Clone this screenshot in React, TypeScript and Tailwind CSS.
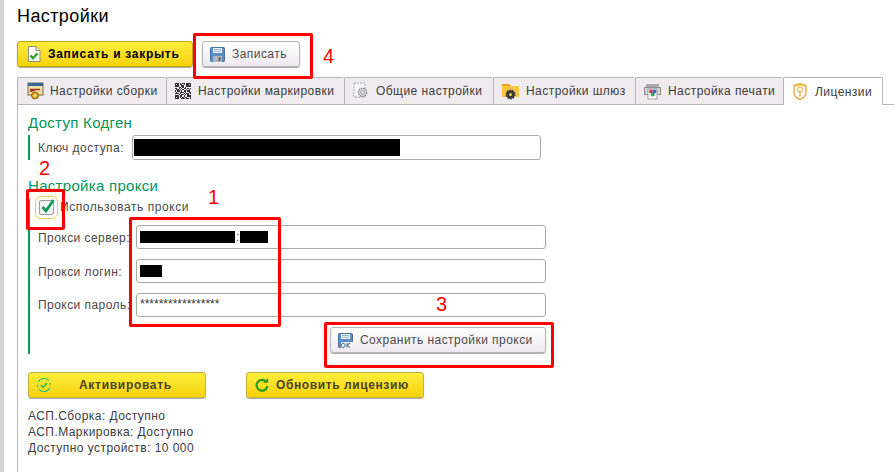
import React from "react";

const FloppyIcon = ({ ok = false }: { ok?: boolean }) => (
  <svg width="15" height="15" viewBox="0 0 15 15" className="shrink-0">
    <rect x="0.5" y="0.5" width="14" height="14" rx="1" fill="#5b8ec4" stroke="#47719f" />
    <rect x="3" y="1" width="9" height="5" fill="#eef4fa" />
    <path d="M4 2.5h7M4 4.3h7" stroke="#7da3c9" strokeWidth="0.8" />
    {ok ? (
      <>
        <rect x="3" y="9" width="12" height="6" fill="#eef2f6" />
        <path d="M5.2 10.2a1.8 2.2 0 1 0 .01 0M9 10v4.5M12 10l-2.8 2.2 2.8 2.3" fill="none" stroke="#3f5f80" strokeWidth="1" />
      </>
    ) : (
      <>
        <rect x="3" y="9" width="9" height="6" fill="#aeb6be" />
        <rect x="8.5" y="10" width="2" height="4" fill="#5b6570" />
      </>
    )}
  </svg>
);

const DocCheckIcon = () => (
  <svg width="14" height="16" viewBox="0 0 14 16" className="shrink-0">
    <path d="M1.5.5h7.5l4 4v11h-11.500z" fill="#fbfbf4" stroke="#8a8f80" />
    <path d="M9 .5v4h4" fill="#e5e5d8" stroke="#8a8f80" />
    <path d="M3.500 9.500l2.500 2.800 4.500-5" fill="none" stroke="#2ca02c" strokeWidth="2.200" />
  </svg>
);

const BuildIcon = () => (
  <svg width="18" height="18" viewBox="0 0 18 18" className="shrink-0">
    <rect x="1" y="1" width="15" height="12" fill="#f5dfa8" stroke="#7a6a3c" />
    <rect x="1" y="1" width="15" height="3" fill="#35659b" />
    <path d="M3 7.500h10M3 9.500l6-2" stroke="#a3322a" strokeWidth="1.400" />
    <circle cx="8" cy="13.500" r="3.500" fill="#e0a020" stroke="#8a6410" />
    <circle cx="8" cy="13.500" r="1.200" fill="#fff3c8" />
  </svg>
);

const qrCells = [
  "1110101101111", "1010110101101", "1110011001111", "0001101010000", "1101010110101", "0110101001010",
  "1011010110110", "0100111010011", "1110100101101", "0001011010100", "1110110100111", "1010101011001", "1110011101101",
];

const QrIcon = () => (
  <svg width="16" height="16" viewBox="0 0 13 13" className="shrink-0" shapeRendering="crispEdges">
    {qrCells.map((row, y) =>
      row.split("").map((c, x) => (c === "1" ? <rect key={`${x}-${y}`} x={x} y={y} width="1" height="1" fill="#333" /> : null))
    )}
  </svg>
);

const GearDocIcon = () => (
  <svg width="16" height="18" viewBox="0 0 16 18" className="shrink-0">
    <rect x="1" y="1" width="11" height="14" fill="#f8f8f8" stroke="#a8a8a8" strokeDasharray="2 1" />
    <circle cx="9.500" cy="10.500" r="4" fill="#eeeeee" stroke="#7d8790" strokeWidth="1.500" strokeDasharray="1.600 0.800" />
    <circle cx="9.500" cy="10.500" r="1.800" fill="#fff" stroke="#7d8790" />
  </svg>
);

const FolderGearIcon = () => (
  <svg width="17" height="17" viewBox="0 0 17 17" className="shrink-0">
    <path d="M0 1h7l2 2h8v11H0z" fill="#fcc63c" />
    <path d="M0 1h7l2 2H0z" fill="#ef9f2b" />
    <circle cx="8.500" cy="11.500" r="4.200" fill="#3a3a3a" stroke="#3a3a3a" strokeWidth="1.600" strokeDasharray="1.600 1" />
    <circle cx="8.500" cy="11.500" r="1.500" fill="#f2c850" />
  </svg>
);

const PrintIcon = () => (
  <svg width="17" height="17" viewBox="0 0 17 17" className="shrink-0">
    <rect x="2" y="1" width="13" height="3" fill="#a9a9a9" />
    <rect x="0.500" y="4.500" width="16" height="7" fill="#d6d6d6" stroke="#8f8f8f" />
    <rect x="4" y="6" width="9" height="10" fill="#fff" stroke="#a0a0a0" />
    <circle cx="7" cy="8.500" r="2" fill="#d33a4a" />
    <circle cx="10.500" cy="8.500" r="2" fill="#3672c8" />
    <circle cx="8.700" cy="11.500" r="2" fill="#3aa655" />
  </svg>
);

const LicenseIcon = () => (
  <svg width="14" height="17" viewBox="0 0 14 17" className="shrink-0">
    <path d="M1 2.500L7 .8l6 1.700v7.500c0 3-3.500 5.500-6 6.300-2.500-.8-6-3.300-6-6.300z" fill="#fff" stroke="#f7a035" strokeWidth="1.300" />
    <path d="M2.500 3.500L7 2.200l4.500 1.300" fill="none" stroke="#f4d63a" strokeWidth="1" />
    <circle cx="7" cy="6.500" r="2.600" fill="#fff4d8" stroke="#efae58" />
    <path d="M7 9v4" stroke="#efae58" strokeWidth="1.600" />
  </svg>
);

const ActivateIcon = () => (
  <svg width="16" height="16" viewBox="0 0 16 16" className="shrink-0" fill="none">
    <path d="M2.300 5A6.500 6.500 0 0 1 13 3.700" stroke="#19c08a" strokeWidth="1.100" />
    <path d="M13.700 11A6.500 6.500 0 0 1 3 12.300" stroke="#19c08a" strokeWidth="1.100" />
    <path d="M1.800 7.500a6.300 6.300 0 0 0 .4 3M14.200 8.500a6.300 6.300 0 0 0-.4-3" stroke="#46c84b" strokeWidth="1.100" />
    <path d="M4.800 8l2.300 2.300 4-4.300" stroke="#34b84a" strokeWidth="1.500" />
  </svg>
);

const RefreshIcon = () => (
  <svg width="14" height="14" viewBox="0 0 14 14" className="shrink-0" fill="none">
    <path d="M11.200 3.800A5.400 5.400 0 1 0 12.400 8" stroke="#2c9a1e" strokeWidth="2.200" />
    <path d="M8 4.800h5.200V0z" fill="#2c9a1e" />
  </svg>
);

const CheckIcon = () => (
  <svg width="15" height="16" viewBox="0 0 15 16" fill="none" className="absolute left-[0px] top-[-3px]">
    <path d="M2.500 9l3.500 4L13.500 2" stroke="#129a5b" strokeWidth="2.800" />
  </svg>
);

const tabs = [
  { label: "Настройки сборки", w: "w-[149px]", icon: <BuildIcon />, gap: "gap-[5px] pl-[9px]" },
  { label: "Настройки маркировки", w: "w-[178px]", icon: <QrIcon />, gap: "gap-[7px] pl-[8px]" },
  { label: "Общие настройки", w: "w-[149px]", icon: <GearDocIcon />, gap: "gap-[7px] pl-[8px]" },
  { label: "Настройки шлюз", w: "w-[142px]", icon: <FolderGearIcon />, gap: "gap-[7px] pl-[8px]" },
  { label: "Настройка печати", w: "w-[148px]", icon: <PrintIcon />, gap: "gap-[7px] pl-[8px]" },
];

const Redact = ({ w, h = "h-[12px]" }: { w: string; h?: string }) => <div className={`bg-black ${w} ${h}`} />;

const ProxyRow = ({ label, low = false, children }: { label: string; low?: boolean; children?: React.ReactNode }) => (
  <div className="flex items-center h-[24px]">
    <span className={`w-[98px] shrink-0 whitespace-nowrap text-[#4a4a4a] ${low ? "pt-[2px]" : ""}`}>{label}</span>
    <div className="w-[410px] h-[24px] border border-[#a9a9a9] rounded-[3px] flex items-center pl-[3px] gap-[1px] bg-white">
      {children}
    </div>
  </div>
);

const Annot = ({ className }: { className: string }) => (
  <div className={`absolute border-[3px] border-[#ff0000] rounded-[2px] ${className}`} />
);

const Num = ({ n, className }: { n: string; className: string }) => (
  <span className={`absolute text-[#ff0000] text-[20px] leading-[24px] ${className}`}>{n}</span>
);

export default function App() {
  return (
    <div className="relative w-[894px] h-[472px] overflow-hidden bg-white flex font-['Liberation_Sans',Arial,sans-serif] text-[12px] leading-[16px] tracking-[0.45px] text-[#3d3d3d]">
      <div className="w-[4px] shrink-0 bg-[#d3d3d3]" />
      <div className="flex-1 pl-[13px] pt-[6px] min-w-0">
        <h1 className="text-[18px] leading-[20px] tracking-[0.4px] text-black">Настройки</h1>

        <div className="flex items-center gap-[9px] mt-[15px] h-[26px]">
          <button className="w-[176px] h-[26px] rounded-[3px] border border-[#c2a400] bg-gradient-to-b from-[#ffee3a] to-[#f6d200] flex items-center pl-[9px] gap-[7px] font-bold tracking-[0.7px] text-black shadow-[0_1px_1px_#aaa]">
            <DocCheckIcon />
            <span>Записать и закрыть</span>
          </button>
          <button className="w-[98px] h-[26px] rounded-[3px] border border-[#b4b4b4] bg-gradient-to-b from-white to-[#eeeaf0] flex items-center pl-[7px] gap-[7px] text-[#4a4a4a] shadow-[0_1px_1px_#aaa]">
            <FloppyIcon />
            <span>Записать</span>
          </button>
        </div>

        <div className="flex mt-[10px] h-[28px] border-b border-[#b5b5b5]">
          {tabs.map((t) => (
            <div
              key={t.label}
              className={`${t.w} ${t.gap} h-[27px] flex items-center shrink-0 whitespace-nowrap bg-[#efebef] border border-r-0 border-b-0 border-[#b5b5b5] rounded-t-[2px] text-[#3d3d3d]`}
            >
              {t.icon}
              <span>{t.label}</span>
            </div>
          ))}
          <div className="w-[100px] h-[28px] flex items-center gap-[8px] pl-[9px] shrink-0 bg-white border border-b-0 border-[#b5b5b5] rounded-t-[2px]">
            <LicenseIcon />
            <span>Лицензии</span>
          </div>
        </div>

        <div className="border-l border-[#b5b5b5] pl-[10px] h-[367px]">
          <h2 className="text-[15px] leading-[18px] tracking-[0.3px] text-[#00965a] pt-[9px] box-content">Доступ Кодген</h2>
          <div className="flex items-center h-[25px] mt-[3px] border-l-2 border-[#00a050] pl-[8px]">
            <span className="w-[94px] shrink-0 whitespace-nowrap text-[#4a4a4a]">Ключ доступа:</span>
            <div className="w-[409px] h-[25px] border border-[#a9a9a9] rounded-[3px] flex items-center pl-[1px]">
              <Redact w="w-[266px]" h="h-[17px]" />
            </div>
          </div>

          <h2 className="text-[15px] leading-[18px] tracking-[0.3px] text-[#00965a] mt-[17px]">Настройка прокси</h2>
          <div className="border-l-2 border-[#00a050] pl-[8px] h-[155px] mt-[4px] relative">
            <div className="flex items-center h-[16px]">
              <div className="relative w-[15px] h-[15px] ml-[1px] mr-[6px] border border-[#9a9a9a] rounded-[2px] bg-[#f4f4f4] outline outline-1 outline-offset-[3px] outline-[#f2c94c] shrink-0">
                <CheckIcon />
              </div>
              <span className="whitespace-nowrap text-[#4a4a4a] tracking-[0.55px]">Использовать прокси</span>
            </div>
            <div className="flex flex-col gap-[10px] mt-[10px]">
              <ProxyRow label="Прокси сервер:" low>
                <Redact w="w-[95px]" />
                <span className="text-[#4a4a4a] tracking-normal">:</span>
                <Redact w="w-[28px]" />
              </ProxyRow>
              <ProxyRow label="Прокси логин:" low>
                <Redact w="w-[22px]" />
              </ProxyRow>
              <ProxyRow label="Прокси пароль:">
                <span className="text-[#333] tracking-normal leading-[12px] self-start pt-[4px]">*****************</span>
              </ProxyRow>
            </div>
            <div className="flex mt-[10px] ml-[292px]">
              <button className="w-[216px] h-[26px] rounded-[3px] border border-[#b4b4b4] bg-gradient-to-b from-white to-[#eeeaf0] flex items-center pl-[7px] gap-[7px] text-[#4a4a4a] shadow-[0_1px_1px_#aaa]">
                <FloppyIcon ok />
                <span className="whitespace-nowrap">Сохранить настройки прокси</span>
              </button>
            </div>
          </div>

          <div className="flex gap-[40px] mt-[18px]">
            <button className="w-[178px] h-[26px] rounded-[3px] border border-[#c4b03a] bg-gradient-to-b from-[#ffee3a] to-[#f6d200] flex items-center pl-[7px] font-bold tracking-[0.7px] text-[#4a4520] shadow-[0_1px_1px_#aaa]">
              <ActivateIcon />
              <span className="ml-[27px]">Активировать</span>
            </button>
            <button className="w-[178px] h-[26px] rounded-[3px] border border-[#c4b03a] bg-gradient-to-b from-[#ffee3a] to-[#f6d200] flex items-center pl-[8px] gap-[7px] font-bold tracking-[0.6px] text-[#4a4520] shadow-[0_1px_1px_#aaa]">
              <RefreshIcon />
              <span className="whitespace-nowrap">Обновить лицензию</span>
            </button>
          </div>

          <div className="mt-[10px] text-[#3d3d3d] tracking-[0.45px]">
            <div>АСП.Сборка: Доступно</div>
            <div>АСП.Маркировка: Доступно</div>
            <div>Доступно устройств: 10 000</div>
          </div>
        </div>
      </div>

      <Annot className="left-[193px] top-[33px] w-[120px] h-[46px]" />
      <Annot className="left-[26px] top-[189px] w-[39px] h-[41px]" />
      <Annot className="left-[129px] top-[217px] w-[152px] h-[110px]" />
      <Annot className="left-[324px] top-[322px] w-[230px] h-[46px]" />
      <Num n="4" className="left-[323px] top-[44px]" />
      <Num n="2" className="left-[39px] top-[156px]" />
      <Num n="1" className="left-[208px] top-[185px]" />
      <Num n="3" className="left-[436px] top-[292px]" />
    </div>
  );
}
